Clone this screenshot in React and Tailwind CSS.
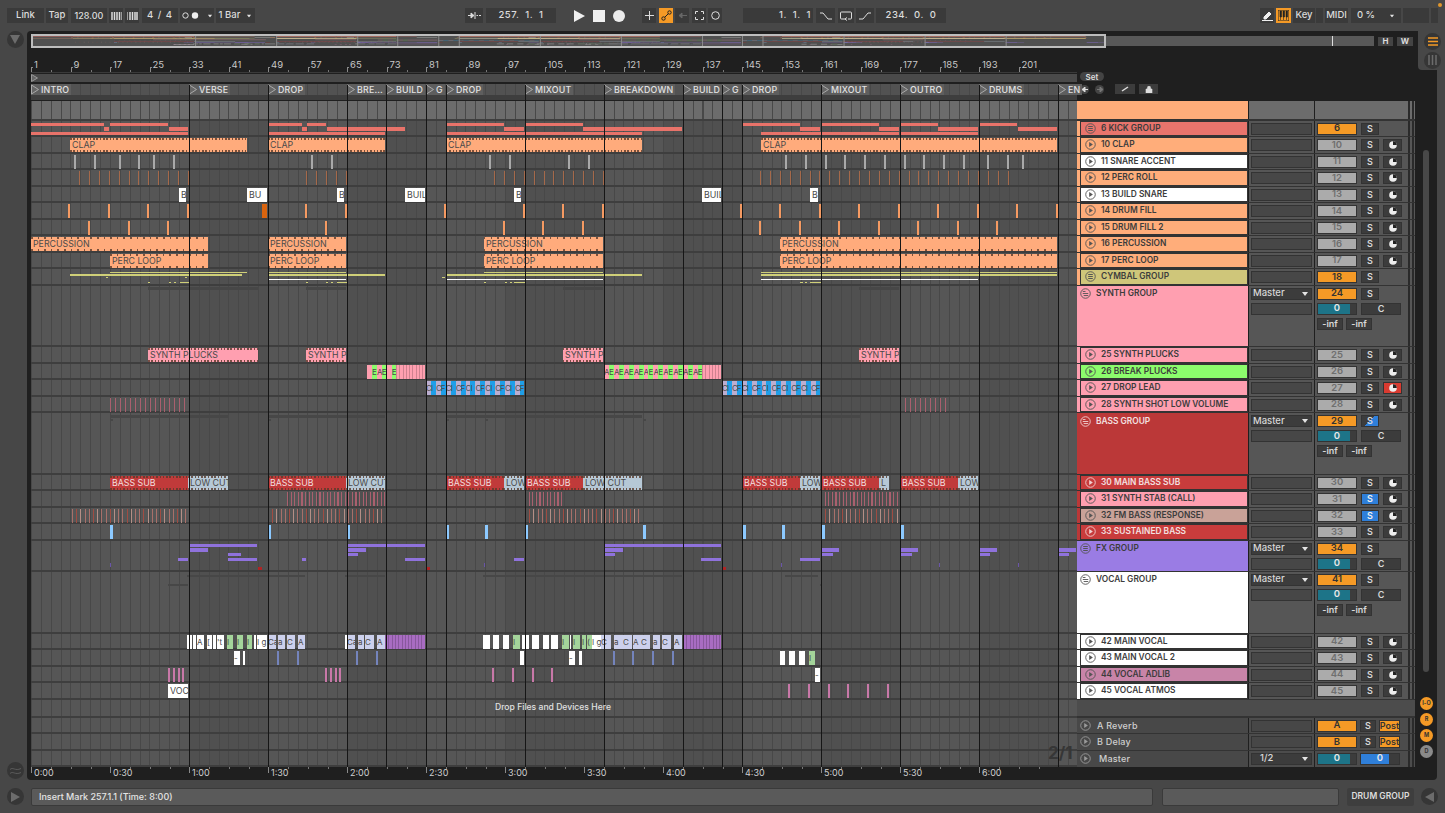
const C = {
  salmon: ["bg-[#e8736a]", "#e8736a"],
  orange: ["bg-[#ffab7c]", "#ffab7c"],
  white: ["bg-white", "#ffffff"],
  gray: ["bg-[#a9a9a9]", "#a9a9a9"],
  brown: ["bg-[#a5694a]", "#a5694a"],
  fill: ["bg-[#f59a62]", "#f59a62"],
  dkorange: ["bg-[#d9640f]", "#d9640f"],
  yellow: ["bg-[#cfcf78]", "#cfcf78"],
  pink: ["bg-[#ff9fb0]", "#ff9fb0"],
  green: ["bg-[#8cfc6c]", "#8cfc6c"],
  lilac: ["bg-[#bcaed0]", "#bcaed0"],
  blue: ["bg-[#1f9fe8]", "#1f9fe8"],
  rose: ["bg-[#a9606e]", "#a9606e"],
  red: ["bg-[#c03a3a]", "#c03a3a"],
  steel: ["bg-[#b6c8d6]", "#b6c8d6"],
  fm: ["bg-[#a8706a]", "#a8706a"],
  fm2: ["bg-[#a04c42]", "#a04c42"],
  fm3: ["bg-[#b58f86]", "#b58f86"],
  sky: ["bg-[#8cc9ff]", "#8cc9ff"],
  purple: ["bg-[#8f72dc]", "#8f72dc"],
  dimpurple: ["bg-[#6a55a8]", "#6a55a8"],
  crimson: ["bg-[#b02424]", "#b02424"],
  sage: ["bg-[#a4d49a]", "#a4d49a"],
  lav: ["bg-[#ccd0ec]", "#ccd0ec"],
  violet: ["bg-[#a86cc2]", "#a86cc2"],
  slate: ["bg-[#7484bc]", "#7484bc"],
  mauve: ["bg-[#c878a8]", "#c878a8"],
  faint: ["bg-[#474747]", "#474747"],
};

const R = (spans, c, y, h) => spans.map(([a, b]) => ({ x: a, w: b - a, c, y, h }));
const L = (xs, w, c) => xs.map((x) => ({ x, w, c, y: 1, h: 14 }));
const S = (a, b, step, w, c) => {
  const out = [];
  for (let x = a; x < b; x += step) out.push({ x, w, c, y: 1, h: 14 });
  return out;
};
const T = (spans, c, t, d, dark) => spans.map(([a, b, txt]) => ({ x: a, w: b - a, c, t: txt || t, d, dark, y: 1, h: 14 }));
const cells = (a, b, step, c1, c2, chars) => {
  const out = [];
  let i = 0;
  for (let x = a; x < b - 0.5; x += step, i++) {
    out.push({ x, w: Math.min(step, b - x), c: i % 2 ? c2 : c1, t: chars[i % chars.length], y: 1, h: 14, tiny: true });
  }
  return out;
};
const fmLines = (a, b) => {
  const out = [];
  let i = 0;
  for (let x = a; x < b; x += 4.2, i++) out.push({ x, w: 1, c: ["fm", "fm2", "fm3", "fm"][i % 4], y: 1, h: 14 });
  return out;
};
const blocks = (list, c) => list.map(([a, b, t]) => ({ x: a, w: b - a, c, t, y: 1, h: 14, tiny: true }));
const striped = (spans, c) => spans.map(([a, b]) => ({ x: a, w: b - a, c, y: 1, h: 14, stripes: true }));

const kick = [
  ...R([[31, 104], [110, 168], [268, 302], [307, 326], [446, 504], [525, 583], [742, 800], [821, 879], [900, 938], [979, 1017]], "salmon", 2, 3.5),
  ...R([[104, 109], [169, 188], [302, 307], [327, 405], [504, 524], [583, 682], [800, 820], [879, 899], [938, 978], [1018, 1057]], "salmon", 6.5, 3.5),
  ...R([[31, 188], [268, 385], [446, 642], [761, 899], [900, 978]], "salmon", 11, 3.5),
];
const cymbal = [
  ...R([[110, 247], [268, 346], [484, 603], [761, 1057]], "yellow", 2.5, 1.5),
  ...R([[70, 242], [268, 385], [446, 642], [761, 1057]], "yellow", 5, 1.5),
  ...R([[268, 346], [446, 603], [761, 978]], "white", 10.2, 1.3),
  ...R([[106, 108], [185, 187], [442, 445]], "yellow", 7.5, 1.5),
  ...R([[148, 150], [169, 171], [174, 176], [180, 190], [306, 308], [326, 328], [331, 333], [337, 348], [484, 486], [505, 507], [510, 512], [514, 526], [800, 803], [805, 807], [810, 822]], "yellow", 12.5, 1.5),
];

const tracks = [
  { kind: "top", h: 20, lane: [] },
  { n: "6 KICK GROUP", num: "6", group: true, strip: "bg-[#ffad7a]", bg: "bg-[#e8746c]", lane: kick },
  { n: "10 CLAP", num: "10", strip: "bg-[#ffad7a]", bg: "bg-[#ffad7a]", lane: T([[70, 247], [268, 385], [446, 642], [761, 1057]], "orange", "CLAP", 3.3) },
  { n: "11 SNARE ACCENT", num: "11", strip: "bg-[#ffad7a]", bg: "bg-white", lane: L([74, 94, 119, 138, 153, 173, 311, 331, 489, 509, 568, 588, 785, 805, 825, 844, 864, 884, 904, 923, 943, 963, 987, 1007, 1022], 1.5, "gray") },
  { n: "12 PERC ROLL", num: "12", strip: "bg-[#ffad7a]", bg: "bg-[#ffad7a]", lane: [...S(79, 189, 9.9, 1, "brown"), ...S(306, 347, 10, 1, "brown"), ...S(494, 603, 9.9, 1, "brown"), ...S(760, 1017, 9.9, 1, "brown")] },
  { n: "13 BUILD SNARE", num: "13", strip: "bg-[#ffad7a]", bg: "bg-white", lane: T([[179, 186, "B"], [247, 267, "BU"], [337, 344, "B"], [405, 425, "BUIL"], [514, 521, "B"], [702, 721, "BUIL"], [810, 818, "B"]], "white") },
  { n: "14 DRUM FILL", num: "14", strip: "bg-[#ffad7a]", bg: "bg-[#ffad7a]", lane: [...L([68, 108, 147, 187, 305, 345, 444, 523, 562, 602, 740, 779, 819, 858, 898, 937, 977, 1016, 1056], 2, "fill"), { x: 262, w: 5, c: "dkorange", y: 1, h: 14 }] },
  { n: "15 DRUM FILL 2", num: "15", strip: "bg-[#ffad7a]", bg: "bg-[#ffad7a]", lane: L([88, 128, 167, 325, 503, 542, 582, 759, 799, 838, 878, 917, 957, 996], 2, "fill") },
  { n: "16 PERCUSSION", num: "16", strip: "bg-[#ffad7a]", bg: "bg-[#ffad7a]", lane: T([[31, 208], [268, 346], [484, 603], [780, 1057]], "orange", "PERCUSSION", 6.6) },
  { n: "17 PERC LOOP", num: "17", strip: "bg-[#ffad7a]", bg: "bg-[#ffad7a]", lane: T([[110, 208], [268, 346], [484, 603], [780, 1057]], "orange", "PERC LOOP", 6.6) },
  { n: "CYMBAL GROUP", num: "18", group: true, strip: "bg-[#ffad7a]", bg: "bg-[#cfc67a]", lane: cymbal },
  {
    n: "SYNTH GROUP", num: "24", big: true, h: 61.5, bg: "bg-[#ff9fb0]", master: true,
    lane: R([[148, 258], [306, 346], [563, 603], [859, 899]], "faint", 1, 3),
  },
  { n: "25 SYNTH PLUCKS", num: "25", strip: "bg-[#ff9fb0]", bg: "bg-[#ff9fb0]", lane: T([[148, 258, "SYNTH PLUCKS"], [306, 346, "SYNTH PI"], [563, 603, "SYNTH PI"], [859, 899, "SYNTH PI"]], "pink", "", 3.3) },
  {
    n: "26 BREAK PLUCKS", num: "26", strip: "bg-[#ff9fb0]", bg: "bg-[#8cfc6c]",
    lane: [...cells(367, 396, 4.94, "pink", "green", ["", "E", "A", "E"]), ...striped([[396, 425], [702, 721]], "pink"), ...cells(604, 702, 4.94, "pink", "green", ["A", "E"])],
  },
  { n: "27 DROP LEAD", num: "27", strip: "bg-[#ff9fb0]", bg: "bg-[#ff9fb0]", red: true, lane: [...cells(426, 524, 4.94, "lilac", "blue", ["C", "I", "C", "F"]), ...cells(722, 820, 4.94, "lilac", "blue", ["C", "I", "C", "F"])] },
  { n: "28 SYNTH SHOT LOW VOLUME", num: "28", strip: "bg-[#ff9fb0]", bg: "bg-[#ff9fb0]", lane: [...S(110, 188, 4.95, 1, "rose"), ...S(900, 948, 4.95, 1, "rose")] },
  {
    n: "BASS GROUP", num: "29", big: true, h: 61.5, bg: "bg-[#bb3838]", light: true, master: true, halfS: true,
    lane: [...R([[110, 228], [268, 385], [446, 642], [742, 860]], "faint", 2, 3), ...R([[110, 113], [268, 271], [446, 449], [485, 488], [643, 646]], "faint", 6, 2)],
  },
  {
    n: "30 MAIN BASS SUB", num: "30", strip: "bg-[#bb3838]", bg: "bg-[#c83c3c]", light: true,
    lane: [
      ...T([[110, 188], [268, 346], [446, 504], [525, 583], [742, 800], [821, 879], [900, 958]], "red", "BASS SUB", 3.3, "light"),
      ...T([[188, 228, "LOW CUT"], [346, 385, "LOW CUT"], [504, 524, "LOW"], [583, 642, "LOW CUT"], [800, 820, "LOW"], [879, 889, "L"], [958, 978, "LOW"]], "steel", "", 3.3),
    ],
  },
  { n: "31 SYNTH STAB (CALL)", num: "31", strip: "bg-[#bb3838]", bg: "bg-[#ff9fb0]", blueS: true, lane: [...S(287, 385, 3.6, 1.2, "rose"), ...S(525, 562, 3.6, 1.2, "rose"), ...S(821, 898, 3.6, 1.2, "rose")] },
  { n: "32 FM BASS (RESPONSE)", num: "32", strip: "bg-[#bb3838]", bg: "bg-[#c9a298]", blueS: true, lane: [...fmLines(72, 188), ...fmLines(268, 385), ...fmLines(525, 640), ...fmLines(821, 898)] },
  { n: "33 SUSTAINED BASS", num: "33", strip: "bg-[#bb3838]", bg: "bg-[#c83c3c]", light: true, lane: L([110, 268, 347, 446, 485, 525, 643, 743, 782, 822, 901], 3, "sky") },
  {
    n: "FX GROUP", num: "34", group: true, big: true, short: true, h: 31, bg: "bg-[#9a7ce4]", master: true,
    lane: [
      ...R([[189, 257], [347, 425], [604, 721]], "purple", 3, 3),
      ...R([[189, 208], [347, 366], [604, 623], [821, 839], [900, 918], [979, 997], [1058, 1076]], "purple", 7, 4),
      ...R([[228, 241], [347, 358], [604, 615], [821, 833], [900, 912], [979, 990], [1058, 1069]], "purple", 12, 3),
      ...R([[178, 188], [228, 257], [302, 306], [405, 425], [514, 524], [701, 721], [800, 820]], "purple", 17, 3),
      ...R([[110, 111], [484, 485], [781, 782], [939, 940], [1018, 1019]], "dimpurple", 22, 4),
      ...R([[258, 262], [426, 430], [722, 726]], "crimson", 26, 3),
    ],
  },
  {
    n: "VOCAL GROUP", num: "41", big: true, h: 62, bg: "bg-white", master: true,
    lane: [...R([[187, 305], [345, 385], [483, 682], [785, 818]], "faint", 3, 2), ...R([[168, 188], [820, 822]], "faint", 12, 2)],
  },
  {
    n: "42 MAIN VOCAL", num: "42", strip: "bg-white", bg: "bg-white",
    lane: [
      ...blocks([[187, 189], [190, 192], [193, 195.5], [197, 204, "A"], [207, 212, "["], [213, 216], [217, 224, "'t"], [240, 241], [254, 256], [257, 267, "I g"], [345, 347], [483, 490], [493, 499], [503, 509], [522, 529], [532, 539], [543, 549], [551, 558], [570, 571], [592, 601, "I g"]], "white"),
      ...blocks([[227, 233, "I"], [237, 243, "I"], [247, 252, "I"], [513, 520, "I"], [562, 569, "I"], [573, 580, "I"], [582, 586, "I"], [587, 592, "("]], "sage"),
      ...blocks([[268, 276, "Ca"], [278, 285, "a"], [287, 295, "C"], [298, 305, "A"], [347, 355, "Ca"], [358, 364, "a"], [365, 374, "C"], [377, 385, "A"], [601, 611, "C"], [614, 623, "a"], [623, 632, "C"], [633, 641, "A"], [641, 650, "C"], [653, 660, "a"], [662, 671, "C"], [674, 682, "A"]], "lav"),
      ...striped([[385, 425], [683, 721]], "violet"),
    ],
  },
  {
    n: "43 MAIN VOCAL 2", num: "43", strip: "bg-white", bg: "bg-white",
    lane: [
      ...blocks([[234, 240, "-"], [243, 245], [520, 524], [569, 575, "-"], [579, 582], [780, 785], [789, 795], [799, 805]], "white"),
      ...blocks([[809, 815, "I"]], "sage"),
      ...L([277, 297, 356, 376, 613, 632, 652, 672], 1.5, "slate"),
    ],
  },
  {
    n: "44 VOCAL ADLIB", num: "44", strip: "bg-white", bg: "bg-[#c884a8]",
    lane: [...L([168, 173, 178, 182, 325, 330, 335, 339, 492, 512, 532, 551], 2, "mauve"), ...blocks([[815, 820, "-"]], "white")],
  },
  {
    n: "45 VOCAL ATMOS", num: "45", strip: "bg-white", bg: "bg-white",
    lane: [...T([[168, 188, "VOC"]], "white"), ...L([788, 808, 828, 847, 867, 887], 1.5, "mauve")],
  },
];

const locators = [[31, "INTRO"], [189, "VERSE"], [268, "DROP"], [347, "BRE..."], [386, "BUILD"], [426, "G"], [446, "DROP"], [525, "MIXOUT"], [604, "BREAKDOWN"], [683, "BUILD"], [722, "G"], [742, "DROP"], [821, "MIXOUT"], [900, "OUTRO"], [979, "DRUMS"], [1058, "EN"]];
const darkBands = [[189, 268], [347, 426], [505, 604], [663, 742], [821, 900], [979, 1058]];
const bars = Array.from({ length: 26 }, (_, i) => 1 + i * 8);
const times = ["0:00", "0:30", "1:00", "1:30", "2:00", "2:30", "3:00", "3:30", "4:00", "4:30", "5:00", "5:30", "6:00"];
const returns = [["A Reverb", "A"], ["B Delay", "B"]];

const gridBg = "bg-[repeating-linear-gradient(90deg,#484848_0,#484848_1px,transparent_1px,transparent_9.875px)]";

const Btn = ({ w, className = "", children }) => (
  <div style={{ width: w }} className={`h-[15px] flex items-center justify-center bg-[#3a3a3a] text-[#dcdcdc] text-[9.5px] font-medium shrink-0 ${className}`}>{children}</div>
);

const Caret = ({ className = "" }) => (
  <svg width="6" height="4" viewBox="0 0 6 4" className={className}><path d="M0 0h6L3 4z" fill="#e4e4e4" /></svg>
);

const PlayCircle = ({ stroke = "#555", size = 11 }) => (
  <svg width={size} height={size} viewBox="0 0 12 12" className="shrink-0">
    <circle cx="6" cy="6" r="5.2" fill="none" stroke={stroke} strokeWidth="1" />
    <path d="M4.6 3.4 8.6 6l-4 2.6z" fill={stroke} />
  </svg>
);

const GroupCircle = ({ stroke = "#555", folder }) => (
  <svg width="11" height="11" viewBox="0 0 12 12" className="shrink-0">
    <circle cx="6" cy="6" r="5.2" fill="none" stroke={stroke} strokeWidth="1" />
    {folder
      ? <path d="M3 3.8h3M3 6h6M4 8.2h5" stroke={stroke} strokeWidth="1" fill="none" />
      : <path d="M3.5 3.8h5M3.5 6h5M3.5 8.2h5" stroke={stroke} strokeWidth="1.2" fill="none" />}
  </svg>
);

const Moon = () => (
  <svg width="8" height="8" viewBox="0 0 8 8">
    <circle cx="4" cy="4" r="3.8" fill="#eee" />
    <path d="M4 4V.2A3.8 3.8 0 0 1 7.800 4z" fill="#222" />
  </svg>
);

const RailCircle = ({ children, className = "" }) => (
  <div className={`w-[17px] h-[17px] rounded-full bg-[#363636] flex items-center justify-center ${className}`}>{children}</div>
);

const TopBar = () => (
  <div className="h-[31px] flex items-center pl-[7px] relative shrink-0">
    <Btn w={37} className="mr-[2px]">Link</Btn>
    <Btn w={22} className="mr-[3px]">Tap</Btn>
    <Btn w={36} className="mr-[2px] text-[9px]">128.00</Btn>
    <Btn w={14} className="mr-[2px]"><svg width="11" height="8"><path d="M1 0v8M3.500 0v8M6 0v8M8.500 0v8" stroke="#ddd" strokeWidth="1.500" /><path d="M10.500 0v8" stroke="#ddd" strokeWidth=".6" /></svg></Btn>
    <Btn w={14} className="mr-[3px]"><svg width="11" height="8"><path d="M.5 0v8" stroke="#ddd" strokeWidth=".6" /><path d="M3 0v8M5.500 0v8M8 0v8M10 0v8" stroke="#ddd" strokeWidth="1.500" /></svg></Btn>
    <Btn w={36} className="mr-[2px] tracking-[1px]">4 / 4</Btn>
    <Btn w={34} className="mr-[2px] gap-[1px]">
      <svg width="18" height="7"><circle cx="3.500" cy="3.500" r="2.700" fill="none" stroke="#ddd" /><circle cx="13" cy="3.500" r="3.200" fill="#eee" /></svg>
      <Caret className="ml-[6px] scale-75" />
    </Btn>
    <Btn w={39} className="gap-[6px]">1 Bar<Caret className="scale-75" /></Btn>

    <Btn w={18} className="ml-[210px] mr-[3px]"><svg width="13" height="7"><path d="M0 3.500h3M3 1l3 2.500L3 6zM7 0v7M8.500 3.500h1.500M11 3.500h2" stroke="#ddd" fill="#ddd" /></svg></Btn>
    <Btn w={70} className="tracking-[0.5px] whitespace-pre">257.  1.  1</Btn>
    <div className="flex items-center ml-[17px] gap-[7px]">
      <svg width="13" height="14"><path d="M1 1l11 6L1 13z" fill="#f0f0f0" /></svg>
      <div className="w-[12px] h-[12px] bg-[#f0f0f0]" />
      <div className="w-[12px] h-[12px] rounded-full bg-[#ececec] ml-[1px]" />
    </div>
    <Btn w={14} className="ml-[17px] mr-[3px]"><svg width="9" height="9"><path d="M4.500 0v9M0 4.500h9" stroke="#ddd" /></svg></Btn>
    <Btn w={14} className="mr-[2px] !bg-[#f59a26]"><svg width="11" height="11" viewBox="0 0 11 11"><circle cx="2.500" cy="8.500" r="1.700" fill="none" stroke="#222" /><circle cx="8.500" cy="2.500" r="1.700" fill="none" stroke="#222" /><path d="M3.700 7.300l3.600-3.600" stroke="#222" /></svg></Btn>
    <Btn w={14} className="mr-[3px]"><svg width="9" height="7"><path d="M9 3.500H4M4 1 1 3.500 4 6z" stroke="#666" fill="#666" /></svg></Btn>
    <Btn w={14} className="mr-[2px]"><svg width="9" height="9" fill="none" stroke="#ddd"><path d="M.5 3V.5H3M6 .5h2.500V3M8.500 6v2.500H6M3 8.500H.5V6" /></svg></Btn>
    <Btn w={14}><svg width="9" height="9"><circle cx="4.500" cy="4.500" r="3.800" fill="none" stroke="#ddd" /></svg></Btn>

    <Btn w={70} className="ml-[21px] mr-[3px] justify-end pr-[2px] tracking-[0.5px] whitespace-pre">1.  1.  1</Btn>
    <Btn w={19} className="mr-[3px]"><svg width="12" height="8" fill="none" stroke="#ddd"><path d="M0 1h3l5 6h4" /></svg></Btn>
    <Btn w={16} className="mr-[2px]"><svg width="12" height="10" fill="none" stroke="#ddd"><path d="M8 8h2.500a1 1 0 0 0 1-1V2a1 1 0 0 0-1-1H1.500a1 1 0 0 0-1 1v5a1 1 0 0 0 1 1H6M7 6.500 5 8l2 1.500" /></svg></Btn>
    <Btn w={18} className="mr-[2px]"><svg width="12" height="8" fill="none" stroke="#ddd"><path d="M0 7h4l5-6h3" /></svg></Btn>
    <Btn w={70} className="tracking-[0.5px] whitespace-pre">234.  0.  0</Btn>

    <Btn w={14} className="ml-[314px] mr-[2px]"><svg width="11" height="11"><path d="M2 7l5-5 2 2-5 5H2zM0 10.500h11" stroke="#eee" fill="#eee" /></svg></Btn>
    <Btn w={15} className="mr-[2px] !bg-[#f59a26]"><svg width="11" height="11" fill="#222"><path d="M0 0h11v11H0z" fill="none" stroke="#222" /><path d="M2 1h1.500v6H2zM5 1h1.500v6H5zM8 1h1.500v6H8zM2.500 7v3M5.500 7v3M8.500 7v3" stroke="#222" strokeWidth=".6" /></svg></Btn>
    <Btn w={22} className="mr-[1px]">Key</Btn>
    <Btn w={7} className="mr-[2px]" />
    <Btn w={23} className="mr-[3px]">MIDI</Btn>
    <Btn w={50} className="mr-[2px] gap-[14px]">0 %<Caret className="scale-75" /></Btn>
    <Btn w={26} className="mr-[2px]" />
    <Btn w={7} />
    <div className="absolute top-[3px] right-[3px] w-[4px] h-[4px] rounded-full bg-[#e0962c]" />
  </div>
);

const Overview = () => {
  let top = 0;
  const rects = [];
  const lines = locators.slice(1, -1).map(([x]) => (x - 31) * 1.026);
  tracks.forEach((t) => {
    const h = t.h || 16.5;
    t.lane.forEach((c, i) => {
      rects.push(<rect key={`${top}-${i}`} x={(c.x - 31) * 1.026} y={top / 70} width={c.w * 1.026} height="0.6" fill={C[c.c][1]} opacity="0.4" />);
    });
    top += h;
  });
  return (
    <div className="h-[14px] flex items-center">
      <div className="w-[1075px] h-[14px] border-2 border-[#bdbdbd] bg-[#505050] shrink-0 overflow-hidden">
        <svg width="1071" height="10" className="block">
          {rects}
          {lines.map((x) => <rect key={x} x={x} y="0" width="1" height="10" fill="#8c8c8c" />)}
        </svg>
      </div>
      <div className="relative w-[268px] h-[10px] bg-[#585858] shrink-0">
        <div className="absolute left-[226px] top-0 w-[1px] h-full bg-[#ddd]" />
      </div>
      <div className="w-[15px] h-[9px] ml-[4px] flex items-center justify-center bg-[#444] text-[#ddd] text-[8px] font-bold">H</div>
      <div className="w-[16px] h-[9px] ml-[4px] flex items-center justify-center bg-[#444] text-[#ddd] text-[8px] font-bold">W</div>
    </div>
  );
};

const BarRuler = () => (
  <div className="relative h-[15px] border-b border-[#3a3a3a]">
    {bars.map((b, i) => (
      <div key={b} style={{ left: i * 39.5 }} className="absolute top-0 h-[14px]">
        <div className="absolute left-0 bottom-0 w-[2px] h-[5px] border-l border-t border-[#8a8a8a]" />
        <div className="absolute left-[20px] bottom-0 w-[1px] h-[2px] bg-[#777]" />
        <span className="absolute left-[3px] top-[2px] text-[9.5px] leading-[10px] text-[#c8c8c8]">{b}</span>
      </div>
    ))}
  </div>
);

const LoopStrip = () => (
  <div className="h-[8px] mt-[1px] bg-[#4a4a4a] flex">
    <svg width="8" height="8"><path d="M.5.5l6 3.500-6 3.500z" fill="#666" stroke="#999" /></svg>
  </div>
);

const Locators = () => (
  <div className={`relative h-[16px] mt-[2px] bg-[#525252] border-b-[5px] border-[#3e3e3e] ${gridBg}`}>
    {locators.map(([x, t]) => (
      <div key={x} style={{ left: x - 31 }} className="absolute top-0 h-[11px] flex items-center bg-[#5e5e5e] pr-[2px] text-[8.8px] font-medium text-[#e2e2e2] tracking-[0.2px] whitespace-nowrap">
        <svg width="9" height="11" className="mr-[1px] shrink-0"><path d="M.5 1l7 4.500-7 4.500z" fill="#666" stroke="#aaa" /></svg>
        {t}
      </div>
    ))}
  </div>
);

const Clip = ({ clip }) => {
  const { x, w, c, y, h, t, d, dark, tiny, stripes } = clip;
  const tick = d === 3.3
    ? "bg-[repeating-linear-gradient(90deg,#5a3a2a_0,#5a3a2a_1.5px,transparent_1.5px,transparent_3.3px)]"
    : "bg-[repeating-linear-gradient(90deg,#5a3a2a_0,#5a3a2a_1.5px,transparent_1.5px,transparent_6.6px)]";
  return (
    <div style={{ left: x - 31, width: w, top: y, height: h }} className={`absolute overflow-hidden flex items-center ${C[c][0]}`}>
      {stripes && <div className="absolute inset-0 bg-[repeating-linear-gradient(90deg,#00000030_0,#00000030_1px,transparent_1px,transparent_3.3px)]" />}
      {d && <div className={`absolute top-0 inset-x-0 h-[2px] opacity-80 ${tick}`} />}
      {d && <div className={`absolute bottom-0 inset-x-0 h-[2px] opacity-80 ${tick}`} />}
      {t && (
        <span className={`whitespace-nowrap ${tiny ? "text-[#3c3c3c] text-[8px]" : "pl-[2px] text-[8.8px]"} ${dark ? "text-[#f3dede]" : "text-[#4a4a4a]"}`}>{t}</span>
      )}
    </div>
  );
};

const Lane = ({ track }) => {
  const h = track.h || 16.5;
  const top = track.kind === "top";
  return (
    <div style={{ height: h }} className={`relative border-b-2 border-[#3e3e3e] ${top ? "bg-[#6c6c6c]" : ""} ${gridBg}`}>
      {track.lane.map((c, i) => <Clip key={i} clip={c} />)}
    </div>
  );
};

const NumBox = ({ children, tone = "gray", w = 40 }) => {
  const tones = {
    gray: "bg-[#ababab] text-[#6f6f6f]",
    orange: "bg-[#f59a26] text-[#333]",
    teal: "bg-[linear-gradient(90deg,#1d7488_0,#1d7488_85%,#3c3c3c_85%)] text-[#e8e8e8]",
    blue: "bg-[linear-gradient(90deg,#2f7fd9_0,#2f7fd9_75%,#3c3c3c_75%)] text-[#e8e8e8]",
  };
  return <div style={{ width: w }} className={`h-[12px] shrink-0 flex items-center justify-center border border-[#333] text-[9.5px] font-semibold ${tones[tone]}`}>{children}</div>;
};

const SmallBtn = ({ w = 18, className = "bg-[#3c3c3c] text-[#d8d8d8]", children }) => (
  <div style={{ width: w }} className={`h-[12px] shrink-0 flex items-center justify-center border border-[#333] text-[9px] font-semibold ${className}`}>{children}</div>
);

const Meter = () => (
  <div className="absolute right-0 top-0 bottom-0 w-[8px] flex gap-[2px] justify-center">
    <div className="w-[2px] h-full bg-[#2a2a2a]" />
    <div className="w-[2px] h-full bg-[#2a2a2a]" />
  </div>
);

const RoutingBox = () => <div className="h-[12px] mx-[2px] bg-[#474747] border border-[#333]" />;

const MasterSelect = () => (
  <div className="h-[12px] mx-[2px] bg-[#3c3c3c] border border-[#333] flex items-center justify-between pl-[1px] pr-[3px] text-[9.5px] font-medium text-[#d8d8d8]">Master<Caret /></div>
);

const TrackRow = ({ track }) => {
  const h = track.h || 16.5;
  if (track.kind === "top") {
    return (
      <div style={{ height: h }} className="flex border-b-2 border-[#333] gap-[1px]">
        <div className="w-[171px] bg-[#ffad7a]" />
        <div className="w-[65px] bg-[#6c6c6c]" />
        <div className="flex-1 bg-[#6c6c6c] relative"><Meter /></div>
      </div>
    );
  }
  const text = track.light ? "text-[#f3e1e1]" : "text-[#3c3c3c]";
  const icon = track.light ? "#f0d0d0" : "#555";
  return (
    <div style={{ height: h }} className="flex gap-[1px] border-b border-[#333]">
      {track.big ? (
        <div className={`w-[171px] pl-[3px] pt-[2px] ${track.bg}`}>
          <div className="flex items-center gap-[5px] h-[12px]">
            <GroupCircle stroke={icon} folder={!track.short} />
            <span className={`text-[8.4px] font-semibold ${text}`}>{track.n}</span>
          </div>
        </div>
      ) : (
        <div className={`w-[171px] pl-[3px] ${track.strip}`}>
          <div className={`h-full flex items-center gap-[5px] pl-[4px] border border-[#333] ${track.bg}`}>
            {track.group ? <GroupCircle stroke={icon} /> : <PlayCircle stroke={icon} />}
            <span className={`text-[8.4px] font-semibold whitespace-nowrap ${text}`}>{track.n}</span>
          </div>
        </div>
      )}
      <div className="w-[65px] bg-[#565656] flex flex-col gap-[3px] pt-[2px]">
        {track.master ? <MasterSelect /> : <RoutingBox />}
        {track.big && <RoutingBox />}
      </div>
      <div className="flex-1 bg-[#565656] relative pl-[2px] pt-[2px] flex flex-col gap-[3px]">
        <div className="flex gap-[4px]">
          <NumBox tone={track.group || track.big ? "orange" : "gray"}>{track.num}</NumBox>
          {track.halfS
            ? <SmallBtn className="bg-[linear-gradient(135deg,#3c3c3c_0,#3c3c3c_50%,#2f7fd9_50%)] text-[#d8d8d8]">S</SmallBtn>
            : <SmallBtn className={track.blueS ? "bg-[#2f7fd9] text-[#eee]" : "bg-[#3c3c3c] text-[#d8d8d8]"}>S</SmallBtn>}
          {!track.group && !track.big && (
            <SmallBtn w={19} className={track.red ? "bg-[#d93a30]" : "bg-[#3c3c3c]"}><Moon /></SmallBtn>
          )}
        </div>
        {track.big && (
          <div className="flex gap-[4px]">
            <NumBox tone="teal">0</NumBox>
            <SmallBtn w={40}>C</SmallBtn>
          </div>
        )}
        {track.big && !track.short && (
          <div className="flex gap-[3px]">
            <SmallBtn w={26}>-inf</SmallBtn>
            <SmallBtn w={26}>-inf</SmallBtn>
          </div>
        )}
        <Meter />
      </div>
    </div>
  );
};

const ReturnRow = ({ name, letter }) => (
  <div className="h-[16.5px] flex gap-[1px] border-b border-[#333]">
    <div className="w-[171px] bg-[#484848] flex items-center gap-[6px] pl-[3px] text-[9px] font-medium text-[#cfcfcf] tracking-[0.2px]">
      <PlayCircle stroke="#9a9a9a" />
      {name}
    </div>
    <div className="w-[65px] bg-[#4c4c4c] pt-[2px]"><RoutingBox /></div>
    <div className="flex-1 bg-[#4c4c4c] relative pl-[2px] pt-[2px] flex gap-[3px]">
      <NumBox tone="orange">{letter}</NumBox>
      <SmallBtn w={16}>S</SmallBtn>
      <SmallBtn w={21} className="bg-[#f59a26] text-[#333] font-medium">Post</SmallBtn>
      <Meter />
    </div>
  </div>
);

const MasterRow = () => (
  <div className="h-[16.5px] flex gap-[1px]">
    <div className="w-[171px] bg-[#484848] flex items-center gap-[8px] pl-[3px] text-[9px] font-medium text-[#cfcfcf] tracking-[0.2px]">
      <PlayCircle stroke="#9a9a9a" />
      Master
    </div>
    <div className="w-[65px] bg-[#4c4c4c] pt-[2px]">
      <div className="h-[12px] mx-[2px] bg-[#3c3c3c] border border-[#333] flex items-center justify-between pl-[8px] pr-[3px] text-[9.5px] font-medium text-[#d8d8d8]">1/2<Caret /></div>
    </div>
    <div className="flex-1 bg-[#4c4c4c] relative pl-[2px] pt-[2px] flex gap-[3px]">
      <NumBox tone="teal">0</NumBox>
      <NumBox tone="blue">0</NumBox>
      <Meter />
    </div>
  </div>
);

const TimeRuler = () => (
  <div className="relative h-[14px]">
    {times.map((t, i) => (
      <div key={t} style={{ left: i * 79 }} className="absolute top-0 h-[14px]">
        <div className="absolute left-0 top-0 w-[1px] h-[6px] bg-[#8a8a8a]" />
        <div className="absolute left-[20px] top-0 w-[1px] h-[2px] bg-[#777]" />
        <div className="absolute left-[40px] top-0 w-[1px] h-[2px] bg-[#777]" />
        <div className="absolute left-[60px] top-0 w-[1px] h-[2px] bg-[#777]" />
        <span className="absolute left-[3px] top-0 text-[9px] leading-[12px] text-[#d0d0d0]">{t}</span>
      </div>
    ))}
  </div>
);

const Arrangement = () => (
  <div className="w-[1046px] shrink-0">
    <BarRuler />
    <LoopStrip />
    <Locators />
    <div className="relative mt-[0.5px] bg-[#565656]">
      {darkBands.map(([a, b]) => (
        <div key={a} style={{ left: a - 31, width: b - a }} className="absolute top-0 bottom-0 bg-black/[0.06]" />
      ))}
      {tracks.map((t, i) => <Lane key={i} track={t} />)}
      <div className={`relative h-[18px] border-b-2 border-[#3e3e3e] ${gridBg}`}>
        <span className="absolute left-[464px] top-[1px] text-[8.6px] font-medium text-[#e0e0e0] z-20">Drop Files and Devices Here</span>
      </div>
      {[0, 1, 2].map((i) => <div key={i} className={`relative h-[16.5px] border-b-2 border-[#3e3e3e] ${gridBg}`} />)}
      <span className="absolute left-[1017px] bottom-[1px] text-[17px] font-bold text-[#363636]">2/1</span>
      {locators.slice(1).map(([x]) => (
        <div key={x} style={{ left: x - 31 }} className="absolute top-[-16px] bottom-0 w-[1px] bg-[#161616]" />
      ))}
    </div>
    <TimeRuler />
  </div>
);

const Mixer = () => (
  <div className="w-[338px] shrink-0">
    <div className="h-[42.5px] pl-[3px] pt-[14px]">
      <div className="w-[24px] h-[9px] rounded-full bg-[#444] flex items-center justify-center text-[8px] font-semibold text-[#ddd]">Set</div>
      <div className="flex items-center mt-[3px]">
        <div className="w-[9px] h-[9px] rounded-full bg-[#444] flex items-center justify-center"><svg width="6" height="5"><path d="M3 0v5L0 2.500zM3 2.500h3" fill="#ddd" stroke="#ddd" /></svg></div>
        <div className="w-[9px] h-[9px] rounded-full bg-[#444] ml-[6px] flex items-center justify-center"><svg width="6" height="5"><path d="M3 0v5l3-2.500zM0 2.500h3" fill="#777" stroke="#777" /></svg></div>
        <div className="w-[20px] h-[10px] bg-[#3c3c3c] ml-[11px] flex items-center justify-center"><svg width="8" height="6"><path d="M1 5l6-4" stroke="#ddd" strokeWidth="1.500" /></svg></div>
        <div className="w-[19px] h-[10px] bg-[#3c3c3c] ml-[4px] flex items-center justify-center"><svg width="8" height="7"><path d="M1 3h6v4H1zM2.500 3V1.500a1.500 1.500 0 0 1 3 0V3" fill="#ddd" stroke="#ddd" strokeWidth=".6" /></svg></div>
      </div>
    </div>
    {tracks.map((t, i) => <TrackRow key={i} track={t} />)}
    <div className="h-[18px] bg-[#4c4c4c] border-b-2 border-[#333]" />
    {returns.map(([n, l]) => <ReturnRow key={n} name={n} letter={l} />)}
    <MasterRow />
  </div>
);

const SideRail = () => (
  <div className="w-[22px] relative">
    <div className="absolute left-[8px] top-[92px] w-[6px] h-[522px] rounded-full bg-[#484848]" />
    <div className="absolute left-[5px] top-[639px] flex flex-col gap-[3px]">
      {["I-O", "R", "M"].map((l) => (
        <div key={l} className="w-[13px] h-[13px] rounded-full bg-[#f59a26] flex items-center justify-center text-[5.5px] font-bold text-[#333]">{l}</div>
      ))}
      <div className="w-[13px] h-[13px] rounded-full bg-[#8a8a8a] flex items-center justify-center text-[5.5px] font-bold text-[#333]">D</div>
    </div>
  </div>
);

const App = () => (
  <div className="w-[1445px] h-[813px] bg-[#474747] flex flex-col overflow-hidden font-['Inter','Liberation_Sans',sans-serif]">
    <TopBar />
    <div className="flex flex-1 min-h-0">
      <div className="w-[27px] shrink-0 flex flex-col justify-between items-center pl-[3px] pb-[1px]">
        <RailCircle><svg width="10" height="9"><path d="M0 0h10L5 9z" fill="#6c6c6c" /></svg></RailCircle>
        <RailCircle><svg width="11" height="8" fill="none" stroke="#5c5c5c"><path d="M0 2.500c3-3 5 2 11-1M0 6.500c3-3 5 2 11-1" /></svg></RailCircle>
      </div>
      <div className="flex-1 mr-[8px] relative bg-[#1f1f1f] rounded-[4px] pl-[4px] pt-[3px] flex flex-col">
        <Overview />
        <div className="flex mt-[10px]">
          <Arrangement />
          <Mixer />
          <SideRail />
        </div>
        <div className="absolute top-0 right-[-8px] w-[27px] h-[39px] bg-[#474747] rounded-bl-[4px] flex flex-col items-center justify-center gap-[2px] pl-[2px]">
          <RailCircle><svg width="10" height="9"><path d="M0 1h10M0 4.500h10M0 8h10" stroke="#f59a26" strokeWidth="1.500" /></svg></RailCircle>
          <RailCircle><svg width="9" height="10"><path d="M1 0v10M4.500 0v10M8 0v10" stroke="#6c6c6c" strokeWidth="1.500" /></svg></RailCircle>
        </div>
      </div>
    </div>
    <div className="h-[33px] shrink-0 flex items-center">
      <div className="w-[27px] pl-[3px] flex justify-center shrink-0">
        <RailCircle><svg width="9" height="10"><path d="M0 0l9 5-9 5z" fill="#6c6c6c" /></svg></RailCircle>
      </div>
      <div className="ml-[4px] w-[1122px] h-[18px] bg-[#5a5a5a] border border-[#3a3a3a] rounded-[2px] flex items-center pl-[7px] text-[9px] font-medium text-[#e4e4e4]">Insert Mark 257.1.1 (Time: 8:00)</div>
      <div className="ml-[9px] w-[177px] h-[18px] bg-[#5a5a5a] border border-[#3a3a3a] rounded-[2px]" />
      <div className="ml-[8px] w-[67px] h-[18px] bg-[#3e3e3e] rounded-[2px] flex items-center justify-center text-[8.5px] font-semibold text-[#ddd] whitespace-nowrap">DRUM GROUP</div>
      <RailCircle className="ml-[7px]"><svg width="9" height="10"><path d="M9 0L0 5l9 5z" fill="#6c6c6c" /></svg></RailCircle>
    </div>
  </div>
);

export default App;
